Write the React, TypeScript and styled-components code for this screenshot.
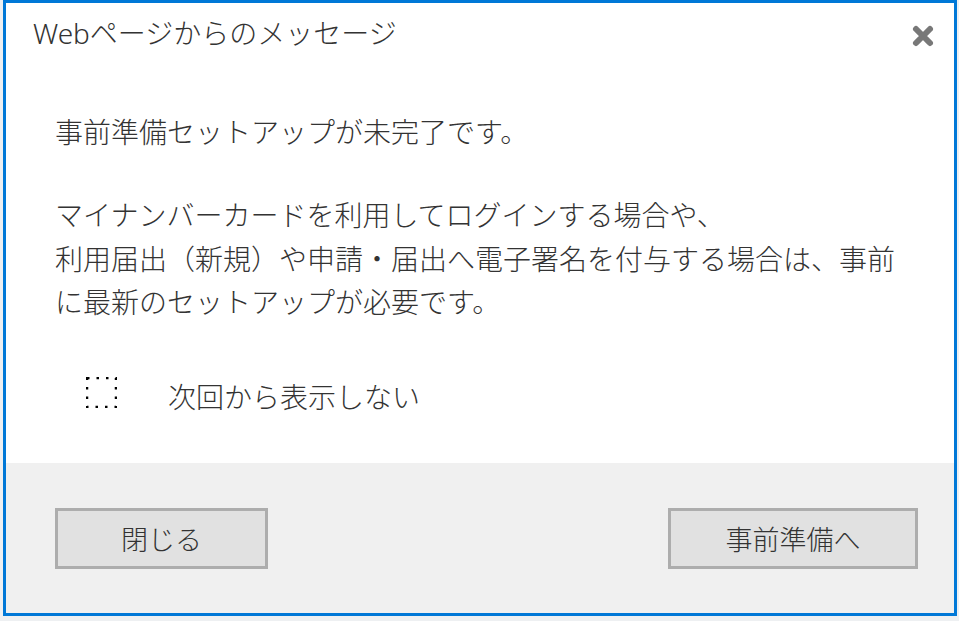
import styled, { createGlobalStyle } from 'styled-components';

const GlobalStyle = createGlobalStyle`
	html, body {
		margin: 0;
		padding: 0;
		background: #eef0f2;
	}
	* {
		box-sizing: border-box;
	}
`;

const Page = styled.div`
	width: 959px;
	height: 621px;
	padding-left: 3px;
	overflow: hidden;
	font-family: 'Noto Sans CJK JP', 'Noto Sans', sans-serif;
	font-weight: 300;
	color: #333333;
`;

const Dialog = styled.div`
	width: 954px;
	height: 616px;
	display: flex;
	flex-direction: column;
	border: 3px solid #0078d7;
	background: #ffffff;
`;

const Header = styled.div`
	height: 60px;
	display: flex;
	align-items: center;
	justify-content: space-between;
	padding: 0 19px 0 27px;
`;

const Title = styled.h1`
	margin: 0;
	font-family: 'Noto Sans', 'Noto Sans CJK JP', sans-serif;
	font-size: 28px;
	font-weight: 300;
	line-height: 42px;
	color: #333333;
`;

const CloseButton = styled.button`
	width: 24px;
	height: 24px;
	padding: 0;
	margin-top: 6px;
	border: none;
	background: none;
	cursor: pointer;
	display: flex;
	align-items: center;
	justify-content: center;
`;

const Body = styled.div`
	flex: 1;
	padding: 47px 0 0 49px;
`;

const Message = styled.p<{ gap?: number }>`
	margin: ${({ gap }) => gap ?? 0}px 0 0;
	font-size: 28px;
	line-height: 43.5px;
`;

const CheckRow = styled.label`
	display: flex;
	align-items: center;
	gap: 51px;
	height: 43px;
	margin-top: 51px;
	padding-left: 31px;
	font-size: 28px;
	cursor: pointer;
`;

const CheckBox = styled.span`
	width: 31px;
	height: 31px;
	margin-bottom: 10px;
	display: block;
`;

const Footer = styled.div`
	height: 150px;
	display: flex;
	align-items: center;
	justify-content: space-between;
	padding: 0 36px 0 49px;
	background: #f0f0f0;
`;

const Button = styled.button<{ wide?: boolean }>`
	width: ${({ wide }) => (wide ? 250 : 213)}px;
	height: 61px;
	margin-top: 1px;
	border: 3px solid #adadad;
	background: #e1e1e1;
	color: #333333;
	font-family: 'Noto Sans CJK JP', sans-serif;
	font-size: 27px;
	font-weight: 300;
	cursor: pointer;
`;

const App = () => {
	return (
		<Page>
			<GlobalStyle />
			<Dialog>
				<Header>
					<Title>Webページからのメッセージ</Title>
					<CloseButton aria-label="閉じる">
						<svg width="24" height="24" viewBox="0 0 24 24">
							<path d="M5 5 L19 19 M19 5 L5 19" stroke="#787878" strokeWidth="6" strokeLinecap="round" />
						</svg>
					</CloseButton>
				</Header>
				<Body>
					<Message>事前準備セットアップが未完了です。</Message>
					<Message gap={39.5}>
						マイナンバーカードを利用してログインする場合や、
						<br />
						利用届出（新規）や申請・届出へ電子署名を付与する場合は、事前
						<br />
						に最新のセットアップが必要です。
					</Message>
					<CheckRow>
						<CheckBox>
							<svg width="31" height="31" viewBox="0 0 31 31">
								<rect x="1" y="1" width="29" height="29" fill="none" stroke="#000" strokeWidth="2.5" strokeDasharray="2.5 7" />
							</svg>
						</CheckBox>
						次回から表示しない
					</CheckRow>
				</Body>
				<Footer>
					<Button>閉じる</Button>
					<Button wide>事前準備へ</Button>
				</Footer>
			</Dialog>
		</Page>
	);
};

export default App;
